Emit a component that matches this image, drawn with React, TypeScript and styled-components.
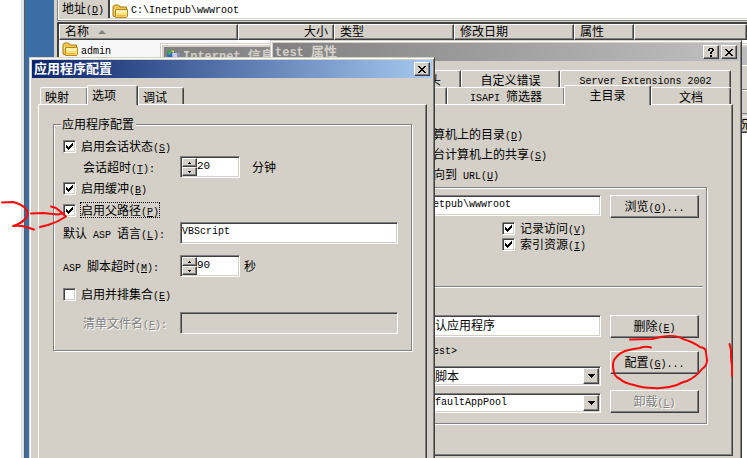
import React, { useId, type ReactNode } from "react";
import styled, { createGlobalStyle, css } from "styled-components";

const face = "#d4d0c8";
const shade = "#808080";
const dark = "#404040";

const GlobalStyle = createGlobalStyle`
  *, *::before, *::after { box-sizing: border-box; }
  body { margin: 0; background: #fff; }
  body, button, input, select {
    font: 12px/16px "Noto Sans CJK SC", sans-serif;
    color: #000;
  }
`;

const raised = css`
  background: ${face};
  border: 1px solid;
  border-color: #fff ${dark} ${dark} #fff;
  box-shadow: inset -1px -1px ${shade};
`;

const sunken = css`
  border: 1px solid;
  border-color: ${shade} #fff #fff ${shade};
  box-shadow: inset 1px 1px ${dark}, inset -1px -1px ${face};
`;

/* ---------- text ---------- */

const Run = styled.span`
  white-space: pre;
`;

const Latin = styled.span`
  font-family: "Liberation Mono", monospace;
  font-size: 10px;
  line-height: 10px;
`;

/* Sets half-width characters in the fixed face; "_X" underlines an access key. */
function Text({ children }: { children: string }) {
  const parts = children.split(/([\u3000-\u9fff]+)/).filter(Boolean);
  return (
    <Run>
      {parts.map((part, i) => {
        if (/[\u3000-\u9fff]/.test(part)) return part;
        const [before, after] = part.split("_");
        return (
          <Latin key={i}>
            {before}
            {after !== undefined && <u>{after[0]}</u>}
            {after !== undefined && after.slice(1)}
          </Latin>
        );
      })}
    </Run>
  );
}

/* ---------- screen and file explorer ---------- */

const Screen = styled.div`
  position: relative;
  display: flex;
  min-height: 100vh;
  overflow: hidden;
`;

const PageEdge = styled.div`
  flex: none;
  width: 24px;
  background: #fff;
  border-right: 3px solid #e0e3e6;
`;

const Desktop = styled.main`
  flex: 1;
  min-width: 0;
  display: flex;
  background: #3a6ea5;
  border-left: 1px solid #5a5a5a;
  padding-left: 29px;
`;

const Explorer = styled.section`
  flex: 1;
  min-width: 0;
  display: flex;
  flex-direction: column;
  background: ${face};
  padding-left: 3px;
`;

const AddressBar = styled.div`
  display: flex;
  height: 21px;
  border-left: 1px solid ${shade};
  border-bottom: 1px solid ${shade};
  box-shadow: inset 1px -1px #fff;
  padding: 0 0 2px 4px;
`;

const AddressLabel = styled.label`
  width: 46px;
`;

const AddressField = styled.div`
  flex: 1;
  display: flex;
  align-items: center;
  gap: 3px;
  padding: 3px 0 0 2px;
  background: #fff;
  border-left: 2px solid ${dark};
`;

const AddressInput = styled.input`
  flex: 1;
  min-width: 0;
  height: 14px;
  border: 0;
  outline: 0;
  padding: 0;
  font-family: "Liberation Mono", monospace;
  font-size: 10px;
`;

const FileView = styled.div`
  flex: 1;
  margin-top: 1px;
  background: #fff;
  border: solid ${dark};
  border-width: 2px 0 0 2px;
`;

const FileTable = styled.table`
  width: 100%;
  table-layout: fixed;
  border-collapse: separate;
  border-spacing: 0;
`;

const HeadCell = styled.th<{ $end?: boolean }>`
  ${raised}
  height: 16px;
  padding: 0 5px 2px;
  font-weight: 400;
  line-height: 12px;
  text-align: ${(p) => (p.$end ? "right" : "left")};
  white-space: nowrap;
`;

const SortMark = styled.svg`
  margin: 0 0 2px 9px;
`;

const NameCell = styled.td`
  height: 420px;
  padding: 0 3px;
  vertical-align: top;
  background: #f7f7f7;
`;

const FileName = styled.div`
  display: flex;
  align-items: center;
  gap: 3px;
  height: 18px;
`;

function Folder() {
  return (
    <svg width="16" height="14" viewBox="0 0 16 14" aria-hidden="true">
      <path d="M1 12V2.5L2.5 1h4L8 3h6.5v9.5H2z" fill="#f3c74b" stroke="#a87a17" />
      <path d="M2 5h12v2H2z" fill="#fff3b5" />
      <path d="M3.500 5.500h12v6.500l-1 1.500h-11z" fill="#fbe27e" stroke="#b98a24" />
      <path d="M4.500 6.500h10v2h-10z" fill="#fff6c4" />
      <path d="M4.500 11h9v1.500h-9z" fill="#edb83c" />
    </svg>
  );
}

/* ---------- windows ---------- */

const Frame = styled.section`
  position: absolute;
  display: flex;
  flex-direction: column;
  bottom: -40px;
  background: ${face};
  border: 1px solid;
  border-color: ${face} ${dark} ${dark} ${face};
  box-shadow: inset 1px 1px #fff, inset -1px -1px ${shade};
  padding: 2px;
`;

const ManagerWindow = styled(Frame)`
  left: 160px;
  top: 43px;
  right: -40px;
  padding: 3px;
`;

const SiteWindow = styled(Frame)`
  left: 270px;
  top: 40px;
  right: 5px;
`;

const AppWindow = styled(Frame)`
  left: 29px;
  top: 57px;
  width: 406px;
`;

const TitleBar = styled.header<{ $active?: boolean }>`
  flex: none;
  display: flex;
  align-items: center;
  gap: 2px;
  height: 18px;
  padding: 0 2px;
  color: ${(p) => (p.$active ? "#fff" : face)};
  background: linear-gradient(
    to right,
    ${(p) => (p.$active ? "#0a246a, #a6caf0" : "#808080, #c0c0c0")}
  );
`;

const Title = styled.h2`
  flex: 1;
  margin: 0;
  font-size: 13px;
  font-weight: 700;
  line-height: 16px;
  padding-bottom: 2px;
  ${Latin} { font-size: 12px; }
`;

const CaptionButton = styled.button`
  ${raised}
  width: 16px;
  height: 14px;
  padding: 0;
  display: grid;
  place-items: center;
`;

function CloseButton() {
  return (
    <CaptionButton aria-label="关闭">
      <svg width="8" height="7" viewBox="0 0 8 7" aria-hidden="true">
        <path d="M0 0h2v1h1v1h2V1h1V0h2v1H7v1H6v1H5v1h1v1h1v1h1v1H6V6H5V5H3v1H2v1H0V6h1V5h1V4h1V3H2V2H1V1H0z" shapeRendering="crispEdges" />
      </svg>
    </CaptionButton>
  );
}

function HelpButton() {
  return (
    <CaptionButton aria-label="帮助">
      <svg width="6" height="9" viewBox="0 0 6 9" shapeRendering="crispEdges" aria-hidden="true">
        <path d="M1 0h4v1h1v2H5v1H4v2H2V4h1V3h1V1H2v2H0V1h1zM2 7h2v2H2z" />
      </svg>
    </CaptionButton>
  );
}

/* ---------- tabs ---------- */

const TabRow = styled.div<{ $end?: boolean }>`
  flex: none;
  display: flex;
  align-items: flex-end;
  justify-content: ${(p) => (p.$end ? "flex-end" : "flex-start")};
  height: 17px;
  padding: 0 2px;
`;

const Tab = styled.button<{ $width: number }>`
  ${raised}
  position: relative;
  flex: none;
  width: ${(p) => p.$width}px;
  height: 17px;
  padding: 0;
  line-height: 15px;
  border-bottom: 0;
  border-radius: 2px 2px 0 0;
  box-shadow: inset -1px 0 ${shade};

  &[aria-selected="true"] {
    z-index: 1;
    height: 20px;
    margin: 0 0 -1px -1px;
    padding-bottom: 3px;
  }
`;

const StartTab = styled(Tab)`
  padding-left: 4px;
  text-align: left;
`;

const Pane = styled.div`
  border: 1px solid;
  border-color: #fff ${dark} ${dark} #fff;
  box-shadow: inset -1px -1px ${shade};
`;

/* ---------- form parts ---------- */

const Group = styled.fieldset`
  min-width: 0;
  margin: 0;
  border: 1px solid ${shade};
  box-shadow: 1px 1px #fff, inset 1px 1px #fff;
`;

const Legend = styled.legend`
  height: 12px;
  line-height: 12px;
  padding: 0 2px 0 1px;
  background: ${face};
`;

const Row = styled.div<{ $gap?: number }>`
  display: flex;
  align-items: center;
  margin-top: ${(p) => p.$gap ?? 0}px;
`;

const FieldLabel = styled.label<{ $indent?: boolean; $off?: boolean }>`
  flex: none;
  width: 117px;
  padding-left: ${(p) => (p.$indent ? 20 : 0)}px;
  ${(p) => p.$off && `color: ${shade}; text-shadow: 1px 1px #fff;`}
`;

const CheckLabel = styled.label`
  display: flex;
  align-items: center;
  gap: 4px;
  height: 16px;
`;

const CheckText = styled.span<{ $focus?: boolean }>`
  padding: 0 1px;
  height: 16px;
  line-height: 15px;
  outline: ${(p) => (p.$focus ? "1px dotted #000" : "0")};
  outline-offset: -1px;
`;

const CheckStack = styled.span`
  display: grid;
  > * { grid-area: 1 / 1; }
  svg { pointer-events: none; }
  input:not(:checked) + svg { visibility: hidden; }
`;

const CheckBox = styled.input`
  ${sunken}
  appearance: none;
  width: 13px;
  height: 13px;
  margin: 0;
  background: #fff;
`;

function Check({ label, checked, focus }: { label: string; checked?: boolean; focus?: boolean }) {
  return (
    <CheckLabel>
      <CheckStack>
        <CheckBox type="checkbox" defaultChecked={checked} />
        <svg width="13" height="13" viewBox="0 0 13 13" shapeRendering="crispEdges" aria-hidden="true">
          <path d="M3 5h1v1h1v1h1V6h1V5h1V4h1V3h1v3H9v1H8v1H7v1H6v1H5V9H4V8H3z" />
        </svg>
      </CheckStack>
      <CheckText $focus={focus}>
        <Text>{label}</Text>
      </CheckText>
    </CheckLabel>
  );
}

const TextBox = styled.input<{ $latin?: boolean; $indent?: number }>`
  ${sunken}
  flex: 1;
  min-width: 0;
  width: 100%;
  height: 22px;
  padding: 1px 3px 4px ${(p) => p.$indent ?? 1}px;
  background: #fff;
  ${(p) => p.$latin && `font-family: "Liberation Mono", monospace; font-size: 10px;`}
  &:disabled { background: ${face}; }
`;

const SpinBox = styled.span`
  ${sunken}
  display: flex;
  width: 60px;
  height: 22px;
  padding: 1px;
  background: #fff;
`;

const SpinButtons = styled.span`
  display: grid;
  grid-template-rows: 1fr 1fr;
  width: 15px;
`;

const SpinButton = styled.button`
  ${raised}
  display: grid;
  place-items: center;
  padding: 0;
`;

const SpinInput = styled.input`
  flex: 1;
  min-width: 0;
  height: 15px;
  border: 0;
  padding: 0;
  background: transparent;
  font-family: "Liberation Mono", monospace;
  font-size: 11px;
`;

const Unit = styled.span<{ $gap: number }>`
  margin-left: ${(p) => p.$gap}px;
`;

function Spinner({ id, value }: { id: string; value: string }) {
  return (
    <SpinBox>
      <SpinButtons>
        <SpinButton aria-label="增加">
          <svg width="3" height="2" viewBox="0 0 3 2" shapeRendering="crispEdges"><path d="M1 0h1v1h1v1H0V1h1z" /></svg>
        </SpinButton>
        <SpinButton aria-label="减少">
          <svg width="3" height="2" viewBox="0 0 3 2" shapeRendering="crispEdges"><path d="M0 0h3v1H2v1H1V1H0z" /></svg>
        </SpinButton>
      </SpinButtons>
      <SpinInput id={id} defaultValue={value} />
    </SpinBox>
  );
}

const PushButton = styled.button`
  ${raised}
  width: 100%;
  height: 23px;
  padding: 0 0 2px;
  &:disabled { color: ${shade}; text-shadow: 1px 1px #fff; }
`;

const SelectStack = styled.span<{ $gap: number }>`
  display: grid;
  align-items: center;
  margin-top: ${(p) => p.$gap}px;
  > * { grid-area: 1 / 1; }
`;

const Select = styled.select<{ $latin?: boolean }>`
  ${sunken}
  appearance: none;
  width: 100%;
  height: 20px;
  padding: 0 18px 1px 1px;
  background: #fff;
  border-radius: 0;
  ${(p) => p.$latin && `font-family: "Liberation Mono", monospace; font-size: 10px;`}
`;

const DropMark = styled.span`
  ${raised}
  justify-self: end;
  display: grid;
  place-items: center;
  width: 16px;
  height: 16px;
  margin-right: 2px;
  pointer-events: none;
`;

function DropDown({ label, value, gap, latin }: { label: string; value: string; gap: number; latin?: boolean }) {
  return (
    <SelectStack $gap={gap}>
      <Select aria-label={label} $latin={latin} defaultValue={value}>
        <option>{value}</option>
      </Select>
      <DropMark>
        <svg width="7" height="4" viewBox="0 0 7 4" shapeRendering="crispEdges" aria-hidden="true">
          <path d="M0 0h7v1H6v1H5v1H4v1H3V3H2V2H1V1H0z" />
        </svg>
      </DropMark>
    </SelectStack>
  );
}

/* ---------- manager window ---------- */

const ManagerBar = styled.div<{ $height: number }>`
  flex: none;
  height: ${(p) => p.$height}px;
  border-top: 1px solid #fff;
  border-bottom: 1px solid ${shade};
`;

const ManagerHead = styled.div`
  ${raised}
  flex: none;
  height: 17px;
  margin-top: 2px;
  padding-left: 573px;
  line-height: 14px;
  white-space: nowrap;
`;

const ManagerList = styled.div`
  flex: 1;
  background: #fff;
`;

function Manager() {
  return (
    <ManagerWindow aria-label="Internet 信息">
      <TitleBar>
        <svg width="15" height="15" viewBox="0 0 15 15" aria-hidden="true">
          <circle cx="5" cy="5" r="4" fill="#2b62c9" />
          <path d="M1 4l2-3 3 1-1 3-2 1z" fill="#3fae49" />
          <path d="M5 1l3 1v2L6 3z" fill="#f0d53c" />
          <path d="M6 4h5l3 1v9H7z" fill="#c9c9ee" />
          <path d="M11 4l3 1v9h-3z" fill="#8d8dc4" />
        </svg>
        <Title><Text>Internet 信息</Text></Title>
      </TitleBar>
      <ManagerBar $height={25} />
      <ManagerBar $height={24} />
      <ManagerHead>况</ManagerHead>
      <ManagerList />
    </ManagerWindow>
  );
}

/* ---------- site properties ---------- */

const SiteTabs = styled.div`
  padding: 9px 6px 0 3px;
`;

const SitePane = styled(Pane)`
  margin: 0 6px 0 3px;
  padding: 20px 25px 31px 143px;
`;

const SourceList = styled.div`
  display: grid;
  grid-template-rows: 20px 20px 22px;
  padding-left: 13px;
  line-height: 18px;
`;

const SiteGroup = styled(Group)`
  padding: 7px 3px 10px 0;
`;

const SiteGrid = styled.div<{ $gap?: number }>`
  display: grid;
  grid-template-columns: 1fr 89px;
  column-gap: 9px;
  margin-top: ${(p) => p.$gap ?? 0}px;
  padding-right: 4px;
`;

const Stack = styled.div`
  display: flex;
  flex-direction: column;
`;

const PathBox = styled(TextBox)`
  flex: none;
  height: 21px;
`;

const NameBox = styled(TextBox)`
  flex: none;
`;

const ButtonStack = styled(Stack)`
  ${PushButton}:nth-child(2) { margin: 13px 0 16px; }
`;

const LogChecks = styled.div`
  margin: 2px 0 0 81px;
`;

const Rule = styled.hr`
  height: 2px;
  margin: 34px 0 0;
  border: 0;
  border-top: 1px solid ${shade};
  background: #fff;
`;

const StartPoint = styled.div`
  height: 16px;
  margin-top: 4px;
  padding-left: 6px;
`;

function SiteProperties() {
  return (
    <SiteWindow role="dialog" aria-label="test 属性">
      <TitleBar>
        <Title><Text>test 属性</Text></Title>
        <HelpButton />
        <CloseButton />
      </TitleBar>
      <SiteTabs role="tablist">
        <TabRow $end>
          <Tab role="tab" $width={52}>头</Tab>
          <Tab role="tab" $width={99}>自定义错误</Tab>
          <Tab role="tab" $width={171}><Text>Server Extensions 2002</Text></Tab>
        </TabRow>
        <TabRow $end>
          <Tab role="tab" aria-label="性能" $width={60} />
          <Tab role="tab" $width={118}><Text>ISAPI 筛选器</Text></Tab>
          <Tab role="tab" aria-selected="true" $width={87}>主目录</Tab>
          <Tab role="tab" $width={80}>文档</Tab>
        </TabRow>
      </SiteTabs>
      <SitePane role="tabpanel">
        <SourceList>
          <Text>算机上的目录(_D)</Text>
          <Text>台计算机上的共享(_S)</Text>
          <Text>向到 URL(_U)</Text>
        </SourceList>
        <SiteGroup>
          <SiteGrid>
            <Stack>
              <PathBox aria-label="本地路径" $latin $indent={5} defaultValue="netpub\wwwroot" />
            </Stack>
            <PushButton><Text>浏览(_O)...</Text></PushButton>
          </SiteGrid>
          <LogChecks>
            <Check label="记录访问(_V)" checked />
            <Check label="索引资源(_I)" checked />
          </LogChecks>
          <Rule />
          <SiteGrid $gap={27}>
            <Stack>
              <NameBox aria-label="应用程序名" defaultValue="默认应用程序" />
              <StartPoint><Text>test&gt;</Text></StartPoint>
              <DropDown label="执行权限" value="纯脚本" gap={9} />
              <DropDown label="应用程序池" value="DefaultAppPool" gap={7} latin />
            </Stack>
            <ButtonStack>
              <PushButton><Text>删除(_E)</Text></PushButton>
              <PushButton><Text>配置(_G)...</Text></PushButton>
              <PushButton disabled><Text>卸载(_L)</Text></PushButton>
            </ButtonStack>
          </SiteGrid>
        </SiteGroup>
      </SitePane>
    </SiteWindow>
  );
}

/* ---------- application configuration ---------- */

const AppTabs = styled.div`
  padding: 9px 5px 0 6px;
`;

const AppPane = styled(Pane)`
  flex: 1;
  margin: 0 5px 6px 6px;
  padding: 13px 14px 0;
`;

const AppGroup = styled(Group)`
  padding: 0 13px 16px 9px;
`;

const AppLegend = styled(Legend)`
  margin-left: -2px;
`;

const Fields = styled.div`
  padding-top: 8px;
`;

function Field({ label, gap, indent, off, children }: {
  label: string;
  gap: number;
  indent?: boolean;
  off?: boolean;
  children: (id: string) => ReactNode;
}) {
  const id = useId();
  return (
    <Row $gap={gap}>
      <FieldLabel htmlFor={id} $indent={indent} $off={off}><Text>{label}</Text></FieldLabel>
      {children(id)}
    </Row>
  );
}

function AppConfiguration() {
  return (
    <AppWindow role="dialog" aria-label="应用程序配置">
      <TitleBar $active>
        <Title>应用程序配置</Title>
        <CloseButton />
      </TitleBar>
      <AppTabs role="tablist">
        <TabRow>
          <StartTab role="tab" $width={48}>映射</StartTab>
          <StartTab role="tab" aria-selected="true" $width={51}>选项</StartTab>
          <StartTab role="tab" $width={46}>调试</StartTab>
        </TabRow>
      </AppTabs>
      <AppPane role="tabpanel">
        <AppGroup>
          <AppLegend>应用程序配置</AppLegend>
          <Fields>
            <Row><Check label="启用会话状态(_S)" checked /></Row>
            <Field label="会话超时(_T):" gap={2} indent>
              {(id) => <><Spinner id={id} value="20" /><Unit $gap={12}>分钟</Unit></>}
            </Field>
            <Row $gap={2}><Check label="启用缓冲(_B)" checked /></Row>
            <Row $gap={6}><Check label="启用父路径(_P)" checked focus /></Row>
            <Field label="默认 ASP 语言(_L):" gap={4}>
              {(id) => <TextBox id={id} $latin defaultValue="VBScript" />}
            </Field>
            <Field label="ASP 脚本超时(_M):" gap={11}>
              {(id) => <><Spinner id={id} value="90" /><Unit $gap={4}>秒</Unit></>}
            </Field>
            <Row $gap={9}><Check label="启用并排集合(_E)" /></Row>
            <Field label="清单文件名(_F):" gap={10} indent off>
              {(id) => <TextBox id={id} disabled />}
            </Field>
          </Fields>
        </AppGroup>
      </AppPane>
    </AppWindow>
  );
}

/* ---------- pen marks ---------- */

const PenMarks = styled.svg`
  position: absolute;
  left: 0;
  top: 0;
  pointer-events: none;
  fill: none;
  stroke: #f40c0c;
  stroke-width: 2;
  stroke-linecap: round;
  stroke-linejoin: round;
`;

export default function App() {
  return (
    <Screen>
      <GlobalStyle />
      <PageEdge />
      <Desktop>
        <Explorer>
          <AddressBar>
            <AddressLabel htmlFor="address"><Text>地址(_D)</Text></AddressLabel>
            <AddressField>
              <Folder />
              <AddressInput id="address" defaultValue="C:\Inetpub\wwwroot" />
            </AddressField>
          </AddressBar>
          <FileView>
            <FileTable>
              <colgroup>
                <col width="179" />
                <col width="96" />
                <col width="120" />
                <col width="120" />
                <col width="60" />
                <col />
              </colgroup>
              <thead>
                <tr>
                  <HeadCell>
                    名称
                    <SortMark width="8" height="4" viewBox="0 0 8 4" aria-hidden="true">
                      <path d="M4 0l4 4H0z" fill={shade} />
                    </SortMark>
                  </HeadCell>
                  <HeadCell $end>大小</HeadCell>
                  <HeadCell>类型</HeadCell>
                  <HeadCell>修改日期</HeadCell>
                  <HeadCell>属性</HeadCell>
                  <HeadCell />
                </tr>
              </thead>
              <tbody>
                <tr>
                  <NameCell>
                    <FileName><Folder /><Text>admin</Text></FileName>
                  </NameCell>
                </tr>
              </tbody>
            </FileTable>
          </FileView>
        </Explorer>
      </Desktop>
      <Manager />
      <SiteProperties />
      <AppConfiguration />
      <PenMarks width="747" height="458" viewBox="0 0 747 458" aria-hidden="true">
        <path d="M2 202.500L13 202Q22 204 26 209Q29 214 26 218Q21 224 13 226Q20 225 26 227L34 229.500" />
        <path d="M31 213.500L43 213L58 214.500L64 213M51 206.500L56 208L61 212L66 216.500Q58 222 48 225L40 227" />
        <path d="M630 339.500L652 339L661 337Q675 334 683 339Q693 342 700 347Q706 348 706 352L707 360Q707 366 702 369Q696 377 687 381Q680 383 677 385Q665 389 654 388Q642 388 634 385Q624 383 620 379Q614 376 614 372Q612 365 614 360Q618 354 625 351Q632 349 640 348Q645 346 651 347.500" />
        <path d="M729.500 344L731 350L731 358L732 366L732 376" />
      </PenMarks>
    </Screen>
  );
}
